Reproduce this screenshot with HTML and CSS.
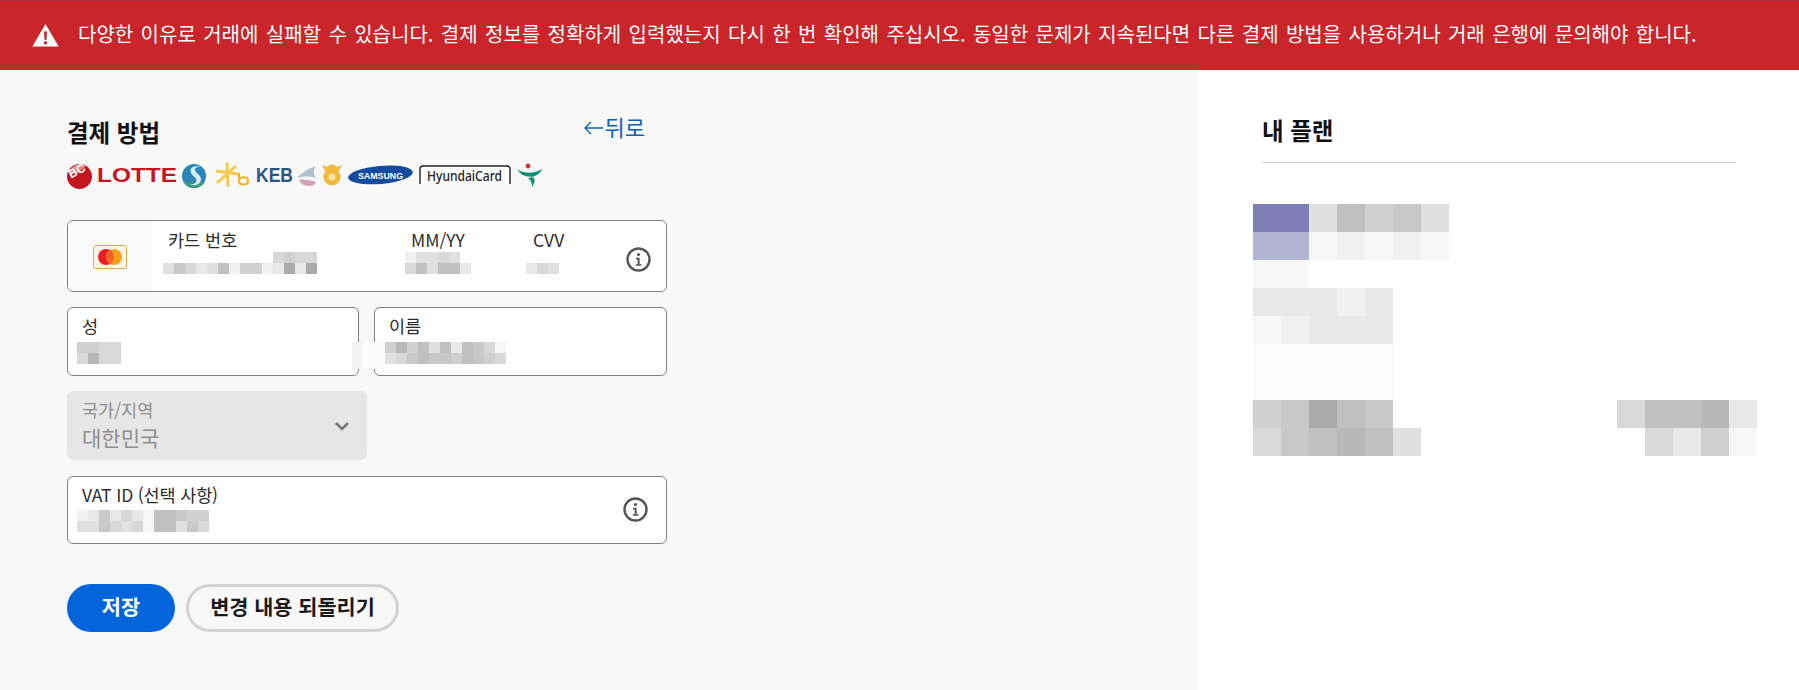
FILE: index.html
```html
<!DOCTYPE html>
<html lang="ko">
<head>
<meta charset="utf-8">
<title>결제 방법</title>
<link rel="stylesheet" href="styles.css">
</head>
<body>
<div class="banner">
  <svg class="warn" viewBox="0 0 27 24" width="27" height="24"><path fill="#fff" d="M13.5 1 26.6 23.5H.4Z"/><path fill="#c9252b" d="M12 8.5h3l-.5 8.5h-2ZM12 18.5h3v2.8h-3Z"/></svg>
  <p class="banner-text">다양한 이유로 거래에 실패할 수 있습니다. 결제 정보를 정확하게 입력했는지 다시 한 번 확인해 주십시오. 동일한 문제가 지속된다면 다른 결제 방법을 사용하거나 거래 은행에 문의해야 합니다.</p>
</div>
<main class="main">
  <section class="pay">
    <div class="pay-head">
      <h2 class="pay-title">결제 방법</h2>
      <a class="back"><svg class="back-arrow" viewBox="0 0 19 14" width="19" height="14"><path d="M7 1 1 7l6 6M1 7h18" fill="none" stroke="#0b62b0" stroke-width="1.4"/></svg>뒤로</a>
    </div>
    <svg class="logos" viewBox="0 0 480 29" width="480" height="29">
      <circle cx="12.5" cy="15.5" r="12.5" fill="#c3161f"/>
      <path d="M2 13C3 7 8 3 14 3c2 0 4 .5 5 1.5C16 9 8 14 2 13Z" fill="#e88"/>
      <text x="2" y="15" transform="rotate(-28 8 12)" class="lg-bc">BC</text>
      <text x="30" y="21" class="lg-lotte" textLength="80" lengthAdjust="spacingAndGlyphs">LOTTE</text>
      <circle cx="127" cy="15" r="12" fill="#2a86b8"/>
      <path d="M116 20a12 12 0 0 0 22 0c-6 2-16 2-22 0Z" fill="#3d9a88"/>
      <path d="M134 6c-7-2-12 1-10 6 2 4 7 5 5 9-1 2-4 3-7 2 6 3 12 0 12-5 0-5-7-6-6-10 1-2 3-2 6-2Z" fill="#d6eef5"/>
      <path d="M160 1.500l1 24M149 10l22 3M150 22l19-17" stroke="#f6c84c" stroke-width="3" fill="none"/>
      <path d="M172 12v9c2 4 9 3 9-1s-5-5-8-2" stroke="#f2b632" stroke-width="2.200" fill="none"/>
      <text x="189" y="21" class="lg-keb" textLength="37" lengthAdjust="spacingAndGlyphs">KEB</text>
      <path d="M249 5c-7 2-16 8-19 12 6-2 13-2 19 0-3-4-3-8 0-12Z" fill="#aebfcd"/>
      <path d="M232 19c5-1 11 0 17 2 0 2-3 4-6 4-5 0-9-2-11-6Z" fill="#d3a4b5"/>
      <circle cx="265" cy="16" r="6" fill="#f8e3a8" stroke="#f0b93a" stroke-width="5"/>
      <path d="M255 4l3 6h14l3-6-5 2-5-3-5 3Z" fill="#f0b93a"/>
      <ellipse cx="313.500" cy="14" rx="32.500" ry="9" fill="#114a9e" transform="rotate(-5 313 14)"/>
      <text x="291" y="18" class="lg-sam" textLength="45" lengthAdjust="spacingAndGlyphs">SAMSUNG</text>
      <path d="M353 23V8q0-3 3-3h84q3 0 3 3v15" fill="#fff" stroke="#222" stroke-width="1.400"/>
      <text x="360" y="20" class="lg-hy" textLength="75" lengthAdjust="spacingAndGlyphs">HyundaiCard</text>
      <circle cx="461" cy="5" r="2.400" fill="#d8303a"/>
      <path d="M450 8c6 5 17 5 25 0-2 5-6 7-10 8 4 1 3 6 0 10 0-4-1-7-4-9 2 0 4-1 5-1.500-7 1-13-2-16-7.500Z" fill="#0e8f78"/>
    </svg>

    <div class="field field--card">
      <div class="card-brand">
        <svg viewBox="0 0 34 24" width="34" height="24"><rect x=".5" y=".5" width="33" height="23" rx="2" fill="#fdf6e6" stroke="#e0a84e"/><circle cx="13" cy="12" r="8" fill="#eb1c26"/><circle cx="21" cy="12" r="8" fill="#f79e1b"/><path d="M17 5.100a8 8 0 0 1 0 13.800 8 8 0 0 1 0-13.800Z" fill="#f2622a"/></svg>
      </div>
      <div class="card-col card-col--num">
        <span class="label">카드 번호</span>
        <div class="mosaic mosaic--sm">
          <div class="mrow"><i></i><i></i><i></i><i></i><i></i><i></i><i></i><i></i><i></i><i></i><i class="s-d8"></i><i class="s-d0"></i><i class="s-d8"></i><i class="s-d8"></i></div>
          <div class="mrow"><i class="s-e0"></i><i class="s-c8"></i><i class="s-d8"></i><i class="s-e8"></i><i class="s-e0"></i><i class="s-c0"></i><i class="s-f0"></i><i class="s-d0"></i><i class="s-d0"></i><i class="s-f0"></i><i class="s-e8"></i><i class="s-aa"></i><i class="s-e8"></i><i class="s-aa"></i></div>
        </div>
      </div>
      <div class="card-col card-col--exp">
        <span class="label">MM/YY</span>
        <div class="mosaic mosaic--sm">
          <div class="mrow"><i class="s-f0"></i><i class="s-e0"></i><i class="s-e0"></i><i class="s-d8"></i><i class="s-e0"></i><i></i></div>
          <div class="mrow"><i class="s-d8"></i><i class="s-c0"></i><i class="s-e0"></i><i class="s-c0"></i><i class="s-c0"></i><i class="s-e8"></i></div>
        </div>
      </div>
      <div class="card-col card-col--cvv">
        <span class="label">CVV</span>
        <div class="mosaic mosaic--sm">
          <div class="mrow"><i></i><i></i><i></i></div>
          <div class="mrow"><i class="s-e8"></i><i class="s-d8"></i><i class="s-e0"></i></div>
        </div>
      </div>
      <svg class="info info--card" viewBox="0 0 25 25" width="25" height="25"><circle cx="12.500" cy="12.500" r="11" fill="none" stroke="#555" stroke-width="2.400"/><circle cx="12.500" cy="7.500" r="1.600" fill="#555"/><path d="M10 10.800h3.600v6.400H15.500v1.600H9.800v-1.600h1.800v-4.800H10Z" fill="#555"/></svg>
    </div>

    <div class="name-row">
      <div class="field field--text">
        <span class="label">성</span>
        <div class="mosaic mosaic--sm">
          <div class="mrow"><i class="s-d0"></i><i class="s-d0"></i><i class="s-d8"></i><i class="s-d8"></i></div>
          <div class="mrow"><i class="s-d8"></i><i class="s-b8"></i><i class="s-d8"></i><i class="s-d8"></i></div>
        </div>
      </div>
      <div class="field field--text field--given">
        <span class="label">이름</span>
        <div class="mosaic mosaic--sm">
          <div class="mrow"><i class="s-d0"></i><i class="s-b8"></i><i class="s-d0"></i><i class="s-c0"></i><i class="s-e0"></i><i class="s-c0"></i><i class="s-e8"></i><i class="s-c0"></i><i class="s-c8"></i><i class="s-d8"></i><i class="s-f6"></i></div>
          <div class="mrow"><i class="s-e0"></i><i class="s-d8"></i><i class="s-c8"></i><i class="s-c0"></i><i class="s-c8"></i><i class="s-c8"></i><i class="s-d0"></i><i class="s-c0"></i><i class="s-c8"></i><i class="s-d0"></i><i class="s-d8"></i></div>
        </div>
      </div>
      <div class="halo"></div>
    </div>

    <div class="select">
      <div class="select-text">
        <span class="select-label">국가/지역</span>
        <span class="select-value">대한민국</span>
      </div>
      <svg class="chev" viewBox="0 0 16 10" width="16" height="10"><path d="M2 2l6 6 6-6" fill="none" stroke="#777" stroke-width="2.600"/></svg>
    </div>

    <div class="field field--vat">
      <div class="vat-text">
        <span class="label">VAT ID (선택 사항)</span>
        <div class="mosaic mosaic--sm">
          <div class="mrow"><i class="s-f0"></i><i class="s-e8"></i><i class="s-c8"></i><i class="s-e8"></i><i class="s-d8"></i><i class="s-e8"></i><i class="s-f6"></i><i class="s-c0"></i><i class="s-c0"></i><i class="s-c8"></i><i class="s-d0"></i><i class="s-d0"></i></div>
          <div class="mrow"><i class="s-e0"></i><i class="s-e0"></i><i class="s-c8"></i><i class="s-d8"></i><i class="s-e0"></i><i class="s-d8"></i><i class="s-f6"></i><i class="s-c0"></i><i class="s-c0"></i><i class="s-e0"></i><i class="s-c8"></i><i class="s-d8"></i></div>
        </div>
      </div>
      <svg class="info" viewBox="0 0 25 25" width="25" height="25"><circle cx="12.500" cy="12.500" r="11" fill="none" stroke="#555" stroke-width="2.400"/><circle cx="12.500" cy="7.500" r="1.600" fill="#555"/><path d="M10 10.800h3.600v6.400H15.500v1.600H9.800v-1.600h1.800v-4.800H10Z" fill="#555"/></svg>
    </div>

    <div class="actions">
      <button class="btn btn--save">저장</button>
      <button class="btn btn--reset">변경 내용 되돌리기</button>
    </div>
  </section>

  <aside class="plan">
    <h2 class="plan-title">내 플랜</h2>
    <div class="mosaic mosaic--lg">
      <div class="mrow"><i class="s-p1"></i><i class="s-p1"></i><i class="s-e0"></i><i class="s-c0"></i><i class="s-d0"></i><i class="s-c8"></i><i class="s-e0"></i></div>
      <div class="mrow"><i class="s-p2"></i><i class="s-p2"></i><i class="s-f6"></i><i class="s-f0"></i><i class="s-f6"></i><i class="s-f0"></i><i class="s-f6"></i></div>
      <div class="mrow"><i class="s-f6"></i><i class="s-f6"></i></div>
      <div class="mrow"><i class="s-e8"></i><i class="s-e8"></i><i class="s-e8"></i><i class="s-f0"></i><i class="s-e8"></i></div>
      <div class="mrow"><i class="s-f6"></i><i class="s-f0"></i><i class="s-e8"></i><i class="s-e8"></i><i class="s-e8"></i></div>
      <div class="mrow"><i class="s-fd"></i><i class="s-fd"></i><i class="s-fd"></i><i class="s-fd"></i><i class="s-fd"></i></div>
      <div class="mrow"><i class="s-fd"></i><i class="s-fd"></i><i class="s-fd"></i><i class="s-fd"></i><i class="s-fd"></i></div>
    </div>
    <div class="plan-split">
      <div class="mosaic mosaic--lg">
        <div class="mrow"><i class="s-d0"></i><i class="s-c8"></i><i class="s-aa"></i><i class="s-c0"></i><i class="s-c8"></i></div>
        <div class="mrow"><i class="s-d8"></i><i class="s-c8"></i><i class="s-c0"></i><i class="s-b8"></i><i class="s-c0"></i><i class="s-e0"></i></div>
      </div>
      <div class="mosaic mosaic--lg">
        <div class="mrow"><i class="s-d8"></i><i class="s-c0"></i><i class="s-c0"></i><i class="s-b8"></i><i class="s-e8"></i></div>
        <div class="mrow"><i></i><i class="s-d8"></i><i class="s-e8"></i><i class="s-d0"></i><i class="s-f6"></i></div>
      </div>
    </div>
  </aside>
</main>
</body>
</html>
```
FILE: styles.css
```css
* { box-sizing: border-box; }
html, body { margin: 0; padding: 0; }
body {
  font-family: "Noto Sans CJK KR", "Noto Sans", sans-serif;
  color: #2c2c2c;
  background: #fff;
  width: 1799px;
  height: 690px;
  overflow: hidden;
}
.banner {
  height: 70px;
  background: #c9252b;
  border-top: 1px solid #a83034;
  display: flex;
  align-items: center;
  padding-left: 32px;
  gap: 19px;
}
.warn { flex: none; margin-top: -2px; }
.banner-text {
  margin: 0 0 3px;
  color: #fff;
  font-size: 20px;
  line-height: 24px;
  white-space: nowrap;
  word-spacing: 1.8px;
}
.main { display: flex; height: 620px; }

.pay {
  width: 1199px;
  background: #f8f8f8;
  padding: 47px 0 0 67px;
}
.pay-head {
  width: 578px;
  display: flex;
  justify-content: space-between;
  align-items: flex-start;
  height: 44px;
}
.pay-title {
  margin: 0;
  font-size: 23.5px;
  line-height: 30px;
  font-weight: 700;
  color: #111;
}
.back {
  display: flex;
  align-items: center;
  gap: 2px;
  margin-top: -2px;
  color: #0b62b0;
  font-size: 22px;
  line-height: 22px;
}
.back-arrow { flex: none; margin-top: 4px; }
.logos { display: block; }

.field {
  background: #fff;
  border: 1px solid #808080;
  border-radius: 6px;
}
.field--card {
  margin-top: 30px;
  width: 600px;
  height: 72px;
  display: flex;
  overflow: hidden;
}
.card-brand {
  width: 84px;
  background: #fafafa;
  display: flex;
  align-items: center;
  justify-content: center;
  padding-top: 2px;
  flex: none;
}
.card-col {
  display: flex;
  flex-direction: column;
  flex: none;
  padding-top: 8px;
}
.card-col .label { padding-left: 5px; height: 23px; }
.card-col--num { margin-left: 11px; width: 242px; }
.card-col--exp { width: 121px; }
.card-col--exp .label { padding-left: 6px; }
.card-col--cvv { width: 74px; }
.card-col--cvv .label { padding-left: 7px; }
.info { flex: none; }
.info--card { margin: 25.5px 0 0 25.5px; }

.label {
  display: block;
  font-size: 17.5px;
  line-height: 22px;
  color: #2c2c2c;
}
.name-row {
  position: relative;
  display: grid;
  grid-template-columns: 292px 293px;
  gap: 15px;
  margin-top: 15px;
  width: 600px;
}
.field--text {
  height: 69px;
  padding: 7px 0 0 9px;
}
.field--given { padding-left: 10px; }
.field--text .label { padding-left: 5px; height: 27px; }
.field--given .label { padding-left: 4px; }
.halo {
  position: absolute;
  left: 285px;
  top: 35px;
  width: 33px;
  height: 27px;
  background: linear-gradient(90deg, #f3f3f3 0 10px, #fbfbfb 10px);
}

.select {
  margin-top: 15px;
  width: 300px;
  height: 69px;
  background: #e6e6e6;
  border-radius: 6px;
  display: flex;
  justify-content: space-between;
  align-items: center;
  padding: 0 17px 0 15px;
}
.select-text { display: flex; flex-direction: column; }
.select-label { font-size: 17.5px; line-height: 22px; color: #8e8e8e; margin-top: -2px; }
.select-value { font-size: 21px; line-height: 28px; color: #8e8e8e; margin-top: 2px; }

.field--vat {
  margin-top: 16px;
  width: 600px;
  height: 68px;
  display: flex;
  justify-content: space-between;
  padding: 7px 18px 0 9px;
}
.vat-text .label { padding-left: 5px; height: 26px; letter-spacing: -0.15px; }
.field--vat .info { margin-top: 13px; }

.actions { display: flex; gap: 11px; margin-top: 40px; }
.btn {
  height: 48px;
  border-radius: 24px;
  font-family: inherit;
  font-size: 20.8px;
  font-weight: 700;
  line-height: 1;
  padding: 0 0 4px;
}
.btn--save { width: 108px; background: #0265dc; border: 0; color: #fff; }
.btn--reset { width: 213px; background: #f8f8f8; border: 3px solid #d2d2d2; color: #1a1a1a; }

.plan { flex: 1; padding: 41px 0 0 54px; }
.plan-title {
  margin: 0 0 41px 9px;
  width: 474px;
  height: 52px;
  padding-top: 4px;
  font-size: 23.5px;
  line-height: 30px;
  font-weight: 700;
  color: #111;
  border-bottom: 1px solid #cfcfcf;
}
.plan-split { display: flex; justify-content: space-between; width: 504px; }

.mosaic { display: flex; flex-direction: column; }
.mrow { display: flex; }
.mrow i { display: block; flex: none; }
.mosaic--sm .mrow i { width: 11px; height: 11px; }
.mosaic--lg .mrow { min-height: 28px; }
.mosaic--lg .mrow i { width: 28px; height: 28px; }

.s-p1 { background: #7f7fb5; }
.s-p2 { background: #b3b3d3; }
.s-aa { background: #aaa; }
.s-b8 { background: #b8b8b8; }
.s-c0 { background: #c0c0c0; }
.s-c8 { background: #c8c8c8; }
.s-d0 { background: #d0d0d0; }
.s-d8 { background: #d8d8d8; }
.s-e0 { background: #e0e0e0; }
.s-e8 { background: #e8e8e8; }
.s-f0 { background: #f0f0f0; }
.s-f6 { background: #f6f6f6; }
.s-fd { background: #fcfcfc; }

.lg-bc { font: 700 12px "Liberation Sans", sans-serif; fill: #fff; }
.lg-lotte { font: 700 20px "Liberation Sans", sans-serif; fill: #c3161f; }
.lg-keb { font: 700 20px "Liberation Sans", sans-serif; fill: #2a5585; }
.lg-sam { font: 700 9px "Liberation Sans", sans-serif; fill: #fff; }
.lg-hy { font: 500 14px "Noto Sans", sans-serif; fill: #222; }
```
